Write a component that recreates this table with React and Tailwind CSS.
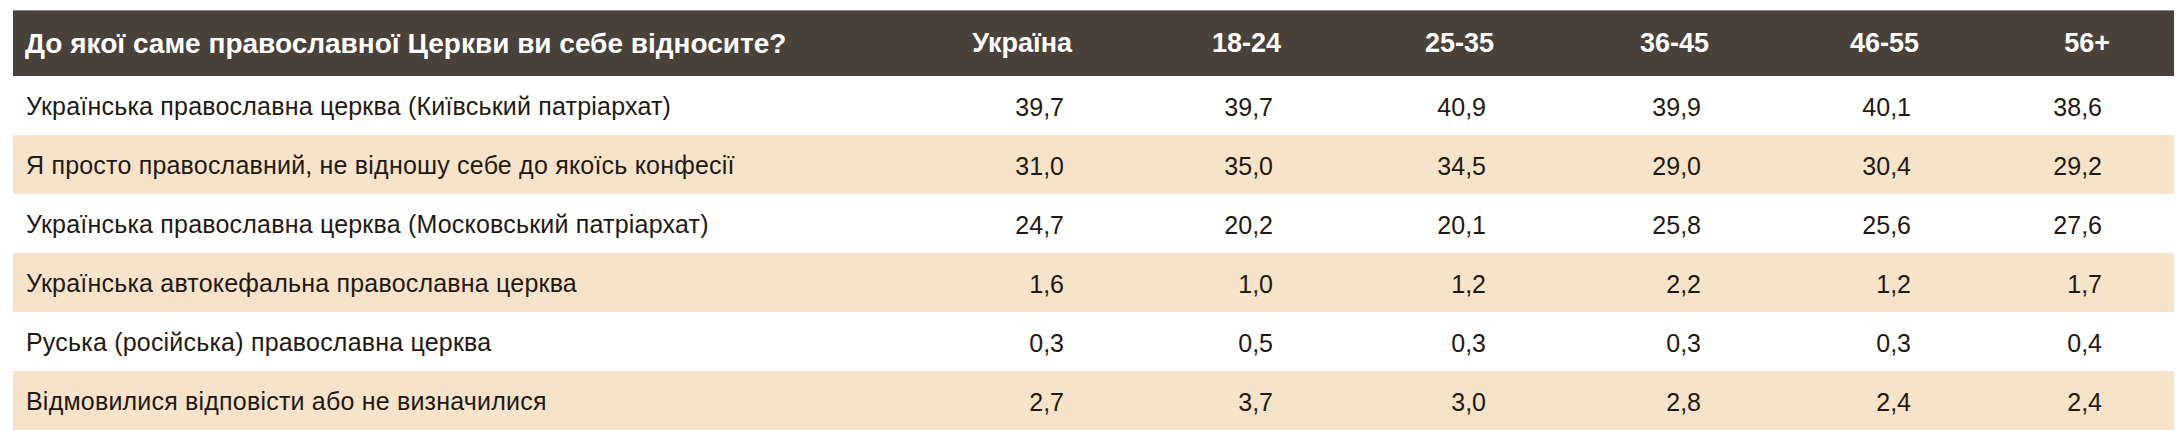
const columns = ['Україна', '18-24', '25-35', '36-45', '46-55', '56+']

const rows = [
  ['Українська православна церква (Київський патріархат)', '39,7', '39,7', '40,9', '39,9', '40,1', '38,6'],
  ['Я просто православний, не відношу себе до якоїсь конфесії', '31,0', '35,0', '34,5', '29,0', '30,4', '29,2'],
  ['Українська православна церква (Московський патріархат)', '24,7', '20,2', '20,1', '25,8', '25,6', '27,6'],
  ['Українська автокефальна православна церква', '1,6', '1,0', '1,2', '2,2', '1,2', '1,7'],
  ['Руська (російська) православна церква', '0,3', '0,5', '0,3', '0,3', '0,3', '0,4'],
  ['Відмовилися відповісти або не визначилися', '2,7', '3,7', '3,0', '2,8', '2,4', '2,4'],
]

const grid = 'grid grid-cols-[914px_209px_209px_213px_215px_210px_191px]'

export default function App() {
  return (
    <div className="min-h-[430px] bg-white pl-[13px] pt-[10px] font-['Liberation_Sans',Arial,sans-serif]">
      <div className="w-[2161px]">
        <div className={`${grid} h-[66px] border-t border-[#8e877e] bg-[#48423b] text-white`}>
          <div className="flex items-center pl-[12px] text-[28px] font-bold">
            До якої саме православної Церкви ви себе відносите?
          </div>
          {columns.map((c) => (
            <div key={c} className="flex items-center justify-end pr-[64px] text-[27px] font-bold">
              {c}
            </div>
          ))}
        </div>
        {rows.map((r, i) => (
          <div
            key={r[0]}
            className={`${grid} h-[59px] text-[25px] text-[#1f1913] ${i % 2 === 1 ? 'bg-[#f6e3c9]' : 'bg-white'}`}
          >
            <div className="flex items-center pl-[13px] pt-[2px] tracking-[0.2px]">{r[0]}</div>
            {r.slice(1).map((v, j) => (
              <div key={j} className="flex items-center justify-end pr-[72px] pt-[4px]">
                {v}
              </div>
            ))}
          </div>
        ))}
      </div>
    </div>
  )
}
